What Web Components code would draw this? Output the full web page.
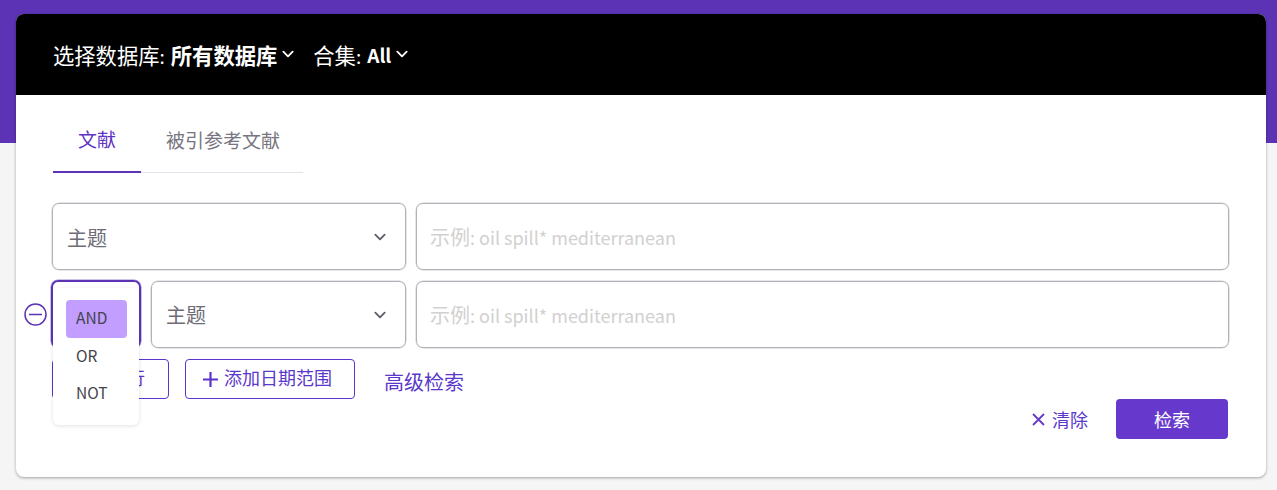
<!DOCTYPE html>
<html lang="zh">
<head>
<meta charset="utf-8">
<title>检索</title>
<style>
  html, body { margin: 0; padding: 0; height: 100%; }
  body {
    font-family: "Noto Sans CJK SC", "Noto Sans", sans-serif;
    background: linear-gradient(#5c33b5 0 143px, #f5f5f5 143px);
    overflow: hidden;
  }
</style>
</head>
<body>
<search-card>
  <db-header></db-header>
  <search-tabs></search-tabs>
  <search-row>
    <field-select label="主题" style="width:354px;padding-top:1px"></field-select>
    <query-input></query-input>
  </search-row>
  <search-row removable>
    <bool-select></bool-select>
    <field-select label="主题" style="width:255px"></field-select>
    <query-input></query-input>
  </search-row>
  <search-actions></search-actions>
</search-card>

<script>
const chevron = (color) => `
  <svg width="14" height="14" viewBox="0 0 12 12" fill="none" stroke="${color}" stroke-width="1.6" stroke-linecap="round" stroke-linejoin="round"><path d="M2 4l4 4 4-4"/></svg>`

class SearchCard extends HTMLElement {
  constructor() {
    super()
    this.attachShadow({ mode: 'open' }).innerHTML = `
      <style>
        :host {
          display: block;
          box-sizing: border-box;
          width: 1250px;
          height: 463px;
          margin: 14px 0 0 16px;
          background: #fff;
          border-radius: 8px;
          overflow: hidden;
          box-shadow: 0 1px 3px rgba(0,0,0,.35);
        }
      </style>
      <slot></slot>`
  }
}

class DbHeader extends HTMLElement {
  constructor() {
    super()
    this.attachShadow({ mode: 'open' }).innerHTML = `
      <style>
        :host {
          display: flex;
          align-items: center;
          height: 81px;
          padding-left: 37px;
          background: #000;
          color: #fff;
          font-size: 21.3px;
        }
        .latin { font-size: 19px; }
        b { font-weight: 700; margin-left: 6px; }
        .group { display: flex; align-items: center; }
        .group + .group { margin-left: 18px; }
        svg { margin-left: 4px; margin-top: -1px; }
      </style>
      <div class="group"><span>选择数据库<span class="latin">:</span></span><b>所有数据库</b>${chevron('#fff')}</div>
      <div class="group"><span>合集<span class="latin">:</span></span><b class="latin">All</b>${chevron('#fff')}</div>`
  }
}

class SearchTabs extends HTMLElement {
  constructor() {
    super()
    this.attachShadow({ mode: 'open' }).innerHTML = `
      <style>
        :host {
          display: flex;
          width: 250px;
          height: 78px;
          margin: 0 0 30px 37px;
          box-sizing: border-box;
          border-bottom: 1px solid #e3e1ea;
          font-size: 19px;
        }
        div {
          display: flex;
          align-items: center;
          justify-content: center;
          box-sizing: border-box;
          height: 78px;
          padding-top: 10px;
          color: #77757f;
        }
        .on { width: 88px; color: #6033c4; border-bottom: 2px solid #5c33b5; }
        .off { margin-left: 25px; }
      </style>
      <div class="on">文献</div>
      <div class="off">被引参考文献</div>`
  }
}

class SearchRow extends HTMLElement {
  constructor() {
    super()
    const removable = this.hasAttribute('removable')
    this.attachShadow({ mode: 'open' }).innerHTML = `
      <style>
        :host {
          display: flex;
          gap: 10px;
          position: relative;
          height: 67px;
          margin: 0 37px 11px 36px;
        }
        svg { position: absolute; left: -28px; top: 22px; }
      </style>
      ${removable ? `<svg width="23" height="23" viewBox="0 0 23 23" fill="none" stroke="#5c33b5" stroke-width="1.5"><circle cx="11.5" cy="11.5" r="10.5"/><path d="M5 11.5h13" stroke-width="1.7"/></svg>` : ''}
      <slot></slot>`
  }
}

class FieldSelect extends HTMLElement {
  constructor() {
    super()
    this.attachShadow({ mode: 'open' }).innerHTML = `
      <style>
        :host {
          display: flex;
          align-items: center;
          justify-content: space-between;
          flex: none;
          box-sizing: border-box;
          height: 67px;
          padding: 0 18px 0 14px;
          border: 1px solid #b3b1b8;
          border-radius: 7px;
          box-shadow: 0 0 0 .5px rgba(179,177,184,.6);
          color: #6e6c75;
          font-size: 20px;
        }
      </style>
      <span>${this.getAttribute('label')}</span>${chevron('#5f5d66')}`
  }
}

class QueryInput extends HTMLElement {
  constructor() {
    super()
    this.attachShadow({ mode: 'open' }).innerHTML = `
      <style>
        :host {
          display: flex;
          flex: 1;
          align-items: center;
          box-sizing: border-box;
          height: 67px;
          padding: 0 13px;
          border: 1px solid #b3b1b8;
          border-radius: 7px;
          box-shadow: 0 0 0 .5px rgba(179,177,184,.6);
          color: #d2d0d0;
          font-size: 18px;
        }
        .cjk { font-size: 20px; }
      </style>
      <span><span class="cjk">示例</span>: oil spill* mediterranean</span>`
  }
}

class BoolSelect extends HTMLElement {
  constructor() {
    super()
    this.attachShadow({ mode: 'open' }).innerHTML = `
      <style>
        :host {
          display: block;
          flex: none;
          position: relative;
          box-sizing: border-box;
          width: 90px;
          height: 68px;
          margin: -1px 0 0 -1px;
          border: 2px solid #5c33b5;
          border-radius: 7px;
          box-shadow: 0 0 0 .5px rgba(92,51,181,.6);
        }
        .menu {
          position: absolute;
          z-index: 2;
          left: 0;
          top: 6px;
          box-sizing: border-box;
          width: 86px;
          height: 137px;
          padding: 12px 12px 0 13px;
          background: #fff;
          border-radius: 6px;
          box-shadow: 0 1px 4px rgba(0,0,0,.12);
          color: #45434b;
          font-size: 15.5px;
        }
        .menu div { display: flex; align-items: center; box-sizing: border-box; height: 37px; padding: 0 0 4px 10px; }
        .menu .on { height: 38px; padding-bottom: 5px; background: #c19eff; border-radius: 4px; width: 61px; }
      </style>
      <div class="menu">
        <div class="on">AND</div>
        <div>OR</div>
        <div>NOT</div>
      </div>`
  }
}

class SearchActions extends HTMLElement {
  constructor() {
    super()
    const plus = `<svg width="15" height="15" viewBox="0 0 15 15" stroke="#5c33cc" stroke-width="2.2"><path d="M7.5 0v15M0 7.5h15"/></svg>`
    this.attachShadow({ mode: 'open' }).innerHTML = `
      <style>
        :host {
          display: block;
          margin: 0 38px 0 36px;
          color: #5a38cc;
          font-size: 18px;
        }
        .left { display: flex; align-items: center; gap: 16px; height: 40px; }
        .outline {
          display: flex;
          align-items: center;
          gap: 6px;
          box-sizing: border-box;
          height: 40px;
          padding-left: 17px;
          border: 1px solid #5c33cc;
          border-radius: 4px;
        }
        .outline span { margin-bottom: 4px; }
        .add { width: 117px; }
        .date { width: 170px; }
        .link { margin-left: 13px; padding-top: 4px; font-size: 20px; }
        .right { display: flex; justify-content: flex-end; align-items: center; height: 40px; }
        .clear { display: flex; align-items: center; gap: 6px; margin-right: 28px; }
        .go {
          display: flex;
          align-items: center;
          justify-content: center;
          width: 112px;
          height: 40px;
          background: #6639cc;
          border-radius: 4px;
          color: #fff;
        }
      </style>
      <div class="left">
        <div class="outline add">${plus}<span>添加行</span></div>
        <div class="outline date">${plus}<span>添加日期范围</span></div>
        <div class="link">高级检索</div>
      </div>
      <div class="right">
        <div class="clear">
          <svg width="15" height="15" viewBox="0 0 15 15" stroke="#6639cc" stroke-width="1.8"><path d="M2 2l11 11M13 2L2 13"/></svg>
          <span>清除</span>
        </div>
        <div class="go">检索</div>
      </div>`
  }
}

customElements.define('search-card', SearchCard)
customElements.define('db-header', DbHeader)
customElements.define('search-tabs', SearchTabs)
customElements.define('search-row', SearchRow)
customElements.define('field-select', FieldSelect)
customElements.define('query-input', QueryInput)
customElements.define('bool-select', BoolSelect)
customElements.define('search-actions', SearchActions)
</script>
</body>
</html>
